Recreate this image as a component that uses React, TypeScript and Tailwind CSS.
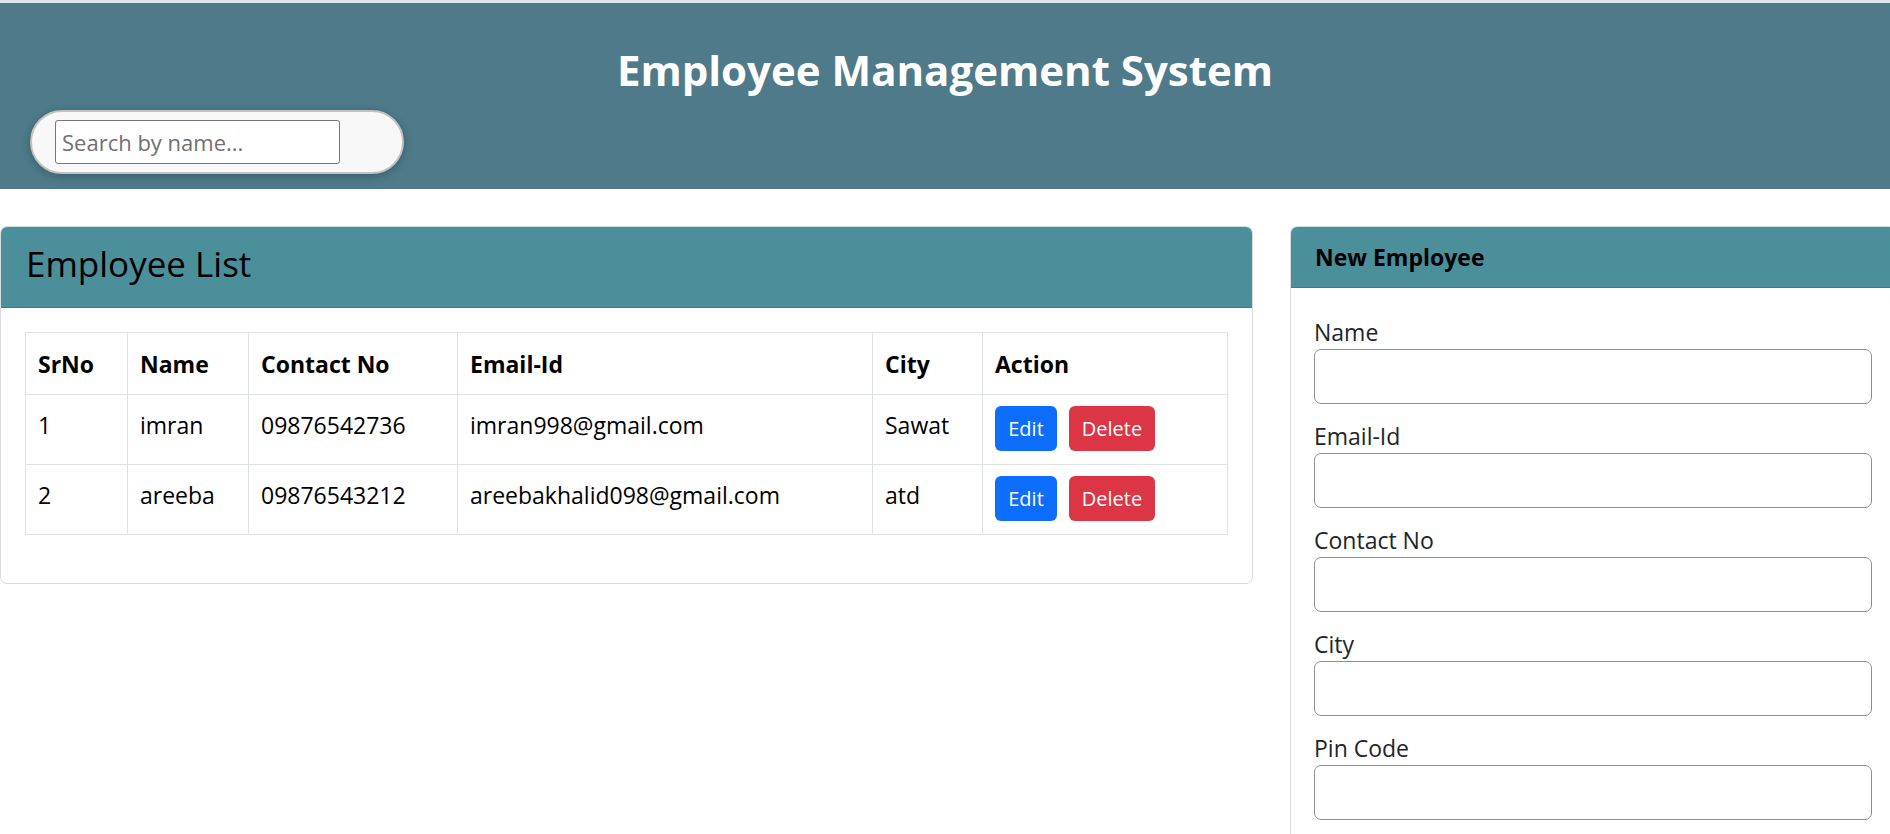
const employees = [
  { id: 1, name: 'imran', contact: '09876542736', email: 'imran998@gmail.com', city: 'Sawat' },
  { id: 2, name: 'areeba', contact: '09876543212', email: 'areebakhalid098@gmail.com', city: 'atd' },
];

const fields = ['Name', 'Email-Id', 'Contact No', 'City', 'Pin Code'];

function EmployeeList() {
  return (
    <div className="w-[1253px] shrink-0 self-start rounded-[7px] border border-[#d9dcdf] overflow-hidden">
      <div className="h-[81px] px-[25px] pb-[6px] flex items-center bg-[#4b8f9b] border-b border-[#3f7a85]">
        <h2 className="text-[35px] leading-[48px] text-black">Employee List</h2>
      </div>
      <div className="px-[24px] pt-[24px] pb-[48px]">
        <table className="w-[1202px] table-fixed border-collapse text-black">
          <colgroup>
            <col className="w-[102px]" />
            <col className="w-[121px]" />
            <col className="w-[209px]" />
            <col className="w-[415px]" />
            <col className="w-[110px]" />
            <col className="w-[245px]" />
          </colgroup>
          <thead>
            <tr className="h-[62px]">
              {['SrNo', 'Name', 'Contact No', 'Email-Id', 'City', 'Action'].map((h) => (
                <th key={h} className="border border-[#dee2e6] px-[12px] text-left align-middle font-bold leading-[30px]">
                  {h}
                </th>
              ))}
            </tr>
          </thead>
          <tbody>
            {employees.map((e) => (
              <tr key={e.id} className="h-[70px]">
                <td className="border border-[#dee2e6] px-[12px] pt-[15px] align-top leading-[30px]">{e.id}</td>
                <td className="border border-[#dee2e6] px-[12px] pt-[15px] align-top leading-[30px]">{e.name}</td>
                <td className="border border-[#dee2e6] px-[12px] pt-[15px] align-top leading-[30px]">{e.contact}</td>
                <td className="border border-[#dee2e6] px-[12px] pt-[15px] align-top leading-[30px]">{e.email}</td>
                <td className="border border-[#dee2e6] px-[12px] pt-[15px] align-top leading-[30px]">{e.city}</td>
                <td className="border border-[#dee2e6] px-[12px] pt-[11px] align-top">
                  <div className="flex gap-[12px]">
                    <button className="h-[45px] w-[62px] rounded-[6px] bg-[#0d6efd] text-white text-[20px]">Edit</button>
                    <button className="h-[45px] w-[86px] rounded-[6px] bg-[#dc3545] text-white text-[20px]">Delete</button>
                  </div>
                </td>
              </tr>
            ))}
          </tbody>
        </table>
      </div>
    </div>
  );
}

function NewEmployee() {
  return (
    <div className="w-[606px] shrink-0 h-[640px] rounded-t-[7px] border border-[#d9dcdf] overflow-hidden">
      <div className="h-[61px] px-[24px] flex items-center bg-[#4b8f9b] border-b border-[#3f7a85]">
        <h5 className="text-[23px] font-bold text-black leading-[30px]">New Employee</h5>
      </div>
      <div className="px-[23px] pt-[29px]">
        {fields.map((f) => (
          <div key={f} className="mb-[17px]">
            <label className="block leading-[30px] text-[#212529]">{f}</label>
            <input className="mt-[2px] block w-full h-[55px] rounded-[7px] border border-[#8f8f8f] bg-white px-[15px]" />
          </div>
        ))}
      </div>
    </div>
  );
}

export default function App() {
  return (
    <div className="w-[1890px] h-[834px] overflow-hidden bg-white text-[23px] text-[#212529] font-['Open_Sans',sans-serif]">
      <div className="h-[3px] bg-[#e1e6ee]" />
      <header className="h-[186px] bg-[#4e7a89]">
        <h1 className="pt-[37px] text-center text-white font-bold text-[42px] leading-[60px]">
          Employee Management System
        </h1>
        <div className="mt-[10px] ml-[30px] w-[374px] h-[64px] rounded-full border-2 border-[#c2c2c2] bg-[#f8f8f8] shadow-[0_2px_8px_rgba(0,0,0,0.25)] flex items-center pl-[23px]">
          <input
            placeholder="Search by name..."
            className="w-[285px] h-[44px] rounded-[3px] border border-[#767676] bg-white px-[6px] text-[22px] text-black placeholder:text-[#707070] outline-none"
          />
        </div>
      </header>
      <main className="flex gap-[37px] pt-[37px]">
        <EmployeeList />
        <NewEmployee />
      </main>
    </div>
  );
}
